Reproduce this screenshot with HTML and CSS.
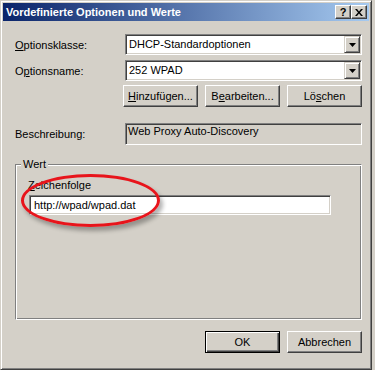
FILE: index.html
```html
<!DOCTYPE html>
<html lang="de">
<head>
    <meta charset="UTF-8">
    <meta name="viewport" content="width=device-width, initial-scale=1.0">
    <title>Vordefinierte Optionen und Werte</title>
    <link rel="stylesheet" href="styles.css">
</head>
<body>
    <div class="window">
        <div class="titlebar">
            <span class="title">Vordefinierte Optionen und Werte</span>
            <div class="caption-buttons">
                <span class="cap-btn help">?</span>
                <span class="cap-btn">
                    <svg width="8" height="7" viewBox="0 0 8 7">
                        <path d="M0 0h2l2 2.5L6 0h2L5 3.5 8 7H6L4 4.5 2 7H0l3-3.5z" fill="#000"/>
                    </svg>
                </span>
            </div>
        </div>

        <div class="client">
            <div class="row">
                <label class="lbl"><u>O</u>ptionsklasse:</label>
                <div class="combo">
                    <span class="combo-text">DHCP-Standardoptionen</span>
                    <span class="combo-btn">
                        <svg width="7" height="4" viewBox="0 0 7 4"><path d="M0 0h7L3.5 4z" fill="#000"/></svg>
                    </span>
                </div>
            </div>

            <div class="row row-2">
                <label class="lbl">O<u>p</u>tionsname:</label>
                <div class="combo">
                    <span class="combo-text">252 WPAD</span>
                    <span class="combo-btn">
                        <svg width="7" height="4" viewBox="0 0 7 4"><path d="M0 0h7L3.5 4z" fill="#000"/></svg>
                    </span>
                </div>
            </div>

            <div class="action-buttons">
                <button class="btn" type="button"><u>H</u>inzufügen...</button>
                <button class="btn" type="button">B<u>e</u>arbeiten...</button>
                <button class="btn" type="button">Lö<u>s</u>chen</button>
            </div>

            <div class="row row-desc">
                <label class="lbl">Beschreibung:</label>
                <div class="readonly">Web Proxy Auto-Discovery</div>
            </div>

            <fieldset class="group">
                <legend>Wert</legend>
                <div class="group-body">
                    <label class="field-lbl" for="value"><u>Z</u>eichenfolge</label>
                    <input class="edit" id="value" type="text" value="http://wpad/wpad.dat">
                </div>
            </fieldset>

            <div class="footer">
                <button class="btn btn-default" type="button">OK</button>
                <button class="btn" type="button">Abbrechen</button>
            </div>
        </div>

        <!-- red marker drawn over the dialog -->
        <div class="marker"></div>
    </div>
</body>
</html>
```

FILE: styles.css
```css
body {
    margin: 0;
    background: #D4D0C8;
    font-family: "Liberation Sans", Arial, sans-serif;
    font-size: 11px;
    color: #000;
}

.window {
    position: relative;
    box-sizing: border-box;
    width: 372px;
    height: 370px;
    padding: 2px;
    background: #D4D0C8;
    border: 1px solid;
    border-color: #D4D0C8 #404040 #404040 #D4D0C8;
    box-shadow: inset 1px 1px #fff, inset -1px -1px #808080;
    display: flex;
    flex-direction: column;
}

.titlebar {
    height: 18px;
    display: flex;
    align-items: center;
    justify-content: space-between;
    padding: 0 2px 0 3px;
    background: linear-gradient(to right, #0A246A, #A6CAF0);
}

.title {
    color: #fff;
    font-weight: bold;
    font-size: 11px;
}

.caption-buttons {
    display: flex;
}

.cap-btn {
    box-sizing: border-box;
    width: 16px;
    height: 14px;
    display: flex;
    align-items: center;
    justify-content: center;
    background: #D4D0C8;
    border: 1px solid;
    border-color: #fff #404040 #404040 #fff;
    box-shadow: inset -1px -1px #808080;
    font-weight: bold;
    font-size: 11px;
}

.client {
    flex: 1;
    display: flex;
    flex-direction: column;
    padding: 13px 7px 0 12px;
}

.row {
    display: flex;
    align-items: center;
}

.row-2 {
    margin-top: 5px;
}

.lbl {
    width: 110px;
}

u {
    text-underline-offset: 1px;
}

.combo {
    flex: 1;
    box-sizing: border-box;
    height: 21px;
    padding: 1px;
    display: flex;
    background: #fff;
    border: 1px solid;
    border-color: #808080 #fff #fff #808080;
    box-shadow: inset 1px 1px #404040, inset -1px -1px #D4D0C8;
}

.combo-text {
    flex: 1;
    padding-left: 2px;
    line-height: 17px;
}

.combo-btn {
    box-sizing: border-box;
    width: 16px;
    height: 17px;
    display: flex;
    align-items: center;
    justify-content: center;
    background: #D4D0C8;
    border: 1px solid;
    border-color: #D4D0C8 #404040 #404040 #D4D0C8;
    box-shadow: inset 1px 1px #fff, inset -1px -1px #808080;
}

.action-buttons {
    display: flex;
    justify-content: flex-end;
    gap: 7px;
    margin-top: 4px;
}

.btn {
    box-sizing: border-box;
    width: 75px;
    height: 22px;
    padding: 0;
    background: #D4D0C8;
    border: 1px solid;
    border-color: #fff #404040 #404040 #fff;
    box-shadow: inset -1px -1px #808080;
    font-family: inherit;
    font-size: 11px;
    color: #000;
}

.btn-default {
    border-color: #000;
    box-shadow: inset 1px 1px #fff, inset -1px -1px #404040, inset -2px -2px #808080;
}

.row-desc {
    margin-top: 16px;
}

.readonly {
    flex: 1;
    box-sizing: border-box;
    height: 22px;
    padding: 1px 2px;
    line-height: 13px;
    border: 1px solid;
    border-color: #808080 #fff #fff #808080;
    box-shadow: inset 1px 1px #404040, inset -1px -1px #D4D0C8;
}

.group {
    box-sizing: border-box;
    height: 162px;
    margin: 13px 0 0 0;
    padding: 0;
    border: 1px solid;
    border-color: #808080 #fff #fff #808080;
    box-shadow: inset 1px 1px #fff, inset -1px -1px #808080;
}

.group legend {
    margin-left: 5px;
    padding: 0 2px;
    line-height: 13px;
    background: #D4D0C8;
}

.group-body {
    display: flex;
    flex-direction: column;
    align-items: flex-start;
    padding: 8px 0 0 13px;
}

.field-lbl {
    line-height: 13px;
    margin-left: -1px;
}

.edit {
    box-sizing: border-box;
    width: 302px;
    height: 20px;
    margin: 3px 0 0;
    padding: 0 4px;
    background: #fff;
    border: 1px solid;
    border-color: #808080 #fff #fff #808080;
    box-shadow: inset 1px 1px #404040, inset -1px -1px #D4D0C8;
    font-family: inherit;
    font-size: 11px;
    color: #000;
    outline: none;
}

.footer {
    display: flex;
    justify-content: flex-end;
    gap: 7px;
    margin-top: 11px;
}

.marker {
    position: absolute;
    left: 20px;
    top: 173px;
    width: 139px;
    height: 53px;
    box-sizing: border-box;
    border: 3px solid #E8141B;
    border-radius: 50%;
    box-shadow: 3px 4px 4px rgba(0, 0, 0, 0.3);
}
```
